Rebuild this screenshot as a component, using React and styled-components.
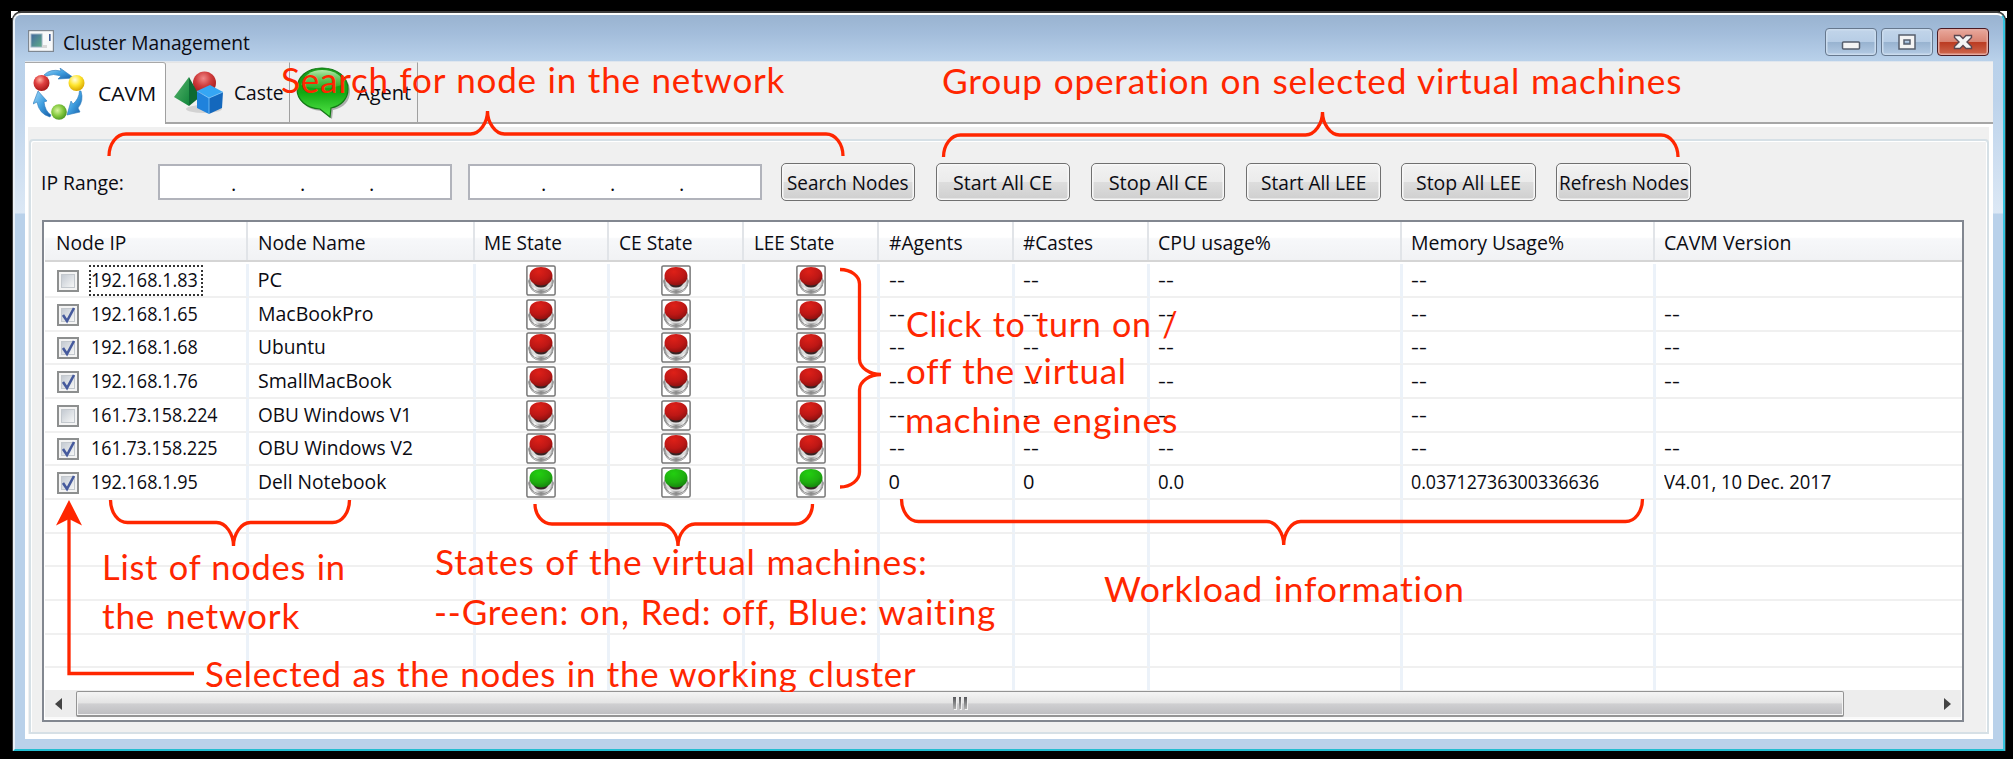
import React, { useLayoutEffect, useRef, useState } from "react";
import styled, { createGlobalStyle } from "styled-components";

const Global = createGlobalStyle`
  * { box-sizing: border-box; }
  html, body { margin: 0; background: #000; }
  body { font-family: "Open Sans", "Noto Sans", sans-serif; font-size: 20px; color: #0b0b12; overflow: hidden; }
`;

/* Text squeezed to a fixed measure */
const FitBox = styled.span`
  display: inline-block;
  flex: none;
  width: ${(p) => p.$w}px;
  white-space: nowrap;
`;
const FitInner = styled.span`
  display: inline-block;
  transform-origin: 0 50%;
`;
function Fit({ w, children }) {
  const ref = useRef(null);
  const [k, setK] = useState(1);
  useLayoutEffect(() => {
    setK(w / ref.current.offsetWidth);
  }, [w]);
  return (
    <FitBox $w={w}>
      <FitInner ref={ref} style={{ transform: `scaleX(${k})` }}>
        {children}
      </FitInner>
    </FitBox>
  );
}

const Desktop = styled.div`
  position: relative;
  width: 2013px;
  height: 759px;
  padding: 13px 8px 8px 13px;
  background: #000;
  overflow: hidden;
`;
const Corner = styled.i`
  position: absolute;
  top: 11px;
  left: ${(p) => p.$x}px;
  width: 7px;
  height: 7px;
  background: #fff;
`;
const Window = styled.div`
  position: relative;
  width: 1992px;
  height: 738px;
  background: #b9d1ea;
  border-style: solid;
  border-width: 2px;
  border-color: #fdfefe #35c3de #22bdd0 #e9f0f7;
  border-radius: 8px 8px 0 0;
  box-shadow: 0 -1px 0 1px #3c3c3c;
  clip-path: inset(-2px -2px 0 -2px);
`;
const TitleBar = styled.div`
  display: flex;
  align-items: flex-start;
  height: 46px;
  padding: 13px 14px 0 13px;
  background: linear-gradient(#99b3d0, #a3bddb 40%, #b9d1ea);
  border-radius: 6px 6px 0 0;
`;
const TitleIcon = styled.span`
  padding-top: 2px;
  svg { display: block; }
`;
const Title = styled.div`
  flex: 1;
  margin: 1px 0 0 9px;
  line-height: 28px;
`;
const TitleButtons = styled.div`
  display: flex;
  gap: 4px;
`;
const TitleButton = styled.div`
  display: grid;
  place-items: center;
  width: 52px;
  height: 28px;
  border: 1.5px solid ${(p) => (p.$close ? "#4b1b22" : "#66788e")};
  border-radius: 4px;
  box-shadow: inset 0 0 0 1.5px ${(p) => (p.$close ? "#e5a99f" : "#cbdcee")};
  background: ${(p) =>
    p.$close
      ? "linear-gradient(#e9a99d, #d98473 48%, #bb3b22 52%, #ce6a50)"
      : "linear-gradient(#c2d5ea, #b7cde5 48%, #98b3d0 52%, #b4cbe4)"};
`;
const Middle = styled.div`
  display: flex;
  height: 678px;
`;
const Side = styled.div`
  width: 10px;
  background: linear-gradient(#b9d1ea, #bdd3eb 40px, #dce8f5 152px, #b9d1ea 153px);
`;
const Client = styled.div`
  display: flex;
  flex-direction: column;
  width: 1968px;
  background: #f0f0f0;
`;
const TabStrip = styled.div`
  display: flex;
  height: 63px;
  border-top: 1px solid #dfe6ee;
  border-bottom: 2px solid #a6a6a6;
`;
const Tab = styled.div`
  display: flex;
  align-items: center;
  height: ${(p) => (p.$active ? 62 : 60)}px;
  width: ${(p) => p.$w}px;
  padding-left: ${(p) => p.$pad}px;
  gap: ${(p) => p.$gap}px;
  background: ${(p) => (p.$active ? "#fff" : "#f0f0f0")};
  border-right: 1.5px solid #a0a0a0;
  border-top: 1px solid ${(p) => (p.$active ? "#a8a8a8" : "#e4e4e4")};
  border-radius: 0 ${(p) => (p.$active ? 3 : 0)}px 0 0;
`;
const TabText = styled.span`
  padding-top: 1px;
  line-height: 28px;
`;
const Panel = styled.div`
  flex: 1;
  padding: 3px 4px 5px 3px;
  background: #fff;
`;
const PanelInner = styled.div`
  height: 100%;
  padding: 12px 0 0 1px;
  background: #f0f0f0;
`;
const Group = styled.div`
  height: 100%;
  padding: 22px 0 0 11px;
  border: 2px solid #d6e0e6;
  border-radius: 4px 4px 0 0;
  box-shadow: inset 1px 1px 0 #fff, inset -1px 0 0 #fff;
`;
const Toolbar = styled.div`
  display: flex;
  align-items: center;
  height: 38px;
  margin-bottom: 19px;
`;
const RangeLabel = styled.span`
  width: 117px;
  margin-left: -1px;
`;
const IpField = styled.div`
  display: flex;
  width: 294px;
  height: 36px;
  margin-right: 16px;
  padding: 6px 0 0 71px;
  background: #fff;
  border: 2px solid #b1b3bb;
  line-height: 24px;
  span { width: 69px; }
`;
const ButtonGroup = styled.div`
  display: flex;
  gap: 20.7px;
  margin-left: 2.5px;
`;
const PushButton = styled.div`
  display: grid;
  place-items: center;
  width: 134.5px;
  height: 38px;
  padding-top: 1px;
  border: 1.5px solid #707070;
  border-radius: 5px;
  box-shadow: inset 0 0 0 1.5px #f8f8f8;
  background: linear-gradient(#f2f2f2, #ebebeb 49%, #dddddd 51%, #cfcfcf);
  line-height: 26px;
`;
const Table = styled.div`
  width: 1922px;
  height: 502px;
  border: 2px solid #828790;
  padding-left: 1px;
  background: #fff;
`;
const cols = "204px 226.5px 134.5px 135px 135px 134.5px 135px 253px 253px 1fr";
const HeadRow = styled.div`
  display: grid;
  grid-template-columns: ${cols};
  height: 40px;
  border-bottom: 2px solid #d5d5d5;
  background: linear-gradient(#fff, #fff 40%, #f7f8fa 44%, #f1f2f4);
`;
const HeadCell = styled.div`
  padding: 7px 0 0 ${(p) => (p.$first ? 10.5 : 8.5)}px;
  margin-right: 1px;
  border-right: ${(p) => (p.$last ? 0 : 2)}px solid #e1e4e8;
  line-height: 28px;
`;
const Rows = styled.div`
  height: 428px;
  padding-top: 2px;
  overflow: hidden;
`;
const Row = styled.div`
  display: grid;
  grid-template-columns: ${cols};
  height: 33.7px;
`;
const Cell = styled.div`
  display: flex;
  align-items: center;
  justify-content: ${(p) => (p.$center ? "center" : "flex-start")};
  padding-top: ${(p) => (p.$center ? 1 : 0)}px;
  padding-left: ${(p) => (p.$center ? 0 : p.$first ? 12 : 8.5)}px;
  border-right: ${(p) => (p.$last ? 0 : 3)}px solid #ecf2f9;
  border-bottom: 2px solid #f0f0f0;
  line-height: 28px;
`;
const Check = styled.span`
  display: grid;
  place-items: center;
  width: 22px;
  height: 22px;
  margin: 2px 10px 0 0;
  border: 2px solid #8d8f8f;
  background: #f4f4f4;
`;
const CheckFace = styled.span`
  width: 14px;
  height: 14px;
  border: 1px solid #c3c8cd;
  background: linear-gradient(135deg, #c4cad2, #f5f6f6);
  svg { display: block; overflow: visible; }
`;
const Ip = styled.span`
  display: flex;
  align-items: center;
  height: 31px;
  padding: 0 3px 0 0;
  border: 2px dotted ${(p) => (p.$focus ? "#333" : "transparent")};
`;
const ScrollBar = styled.div`
  display: flex;
  align-items: center;
  height: 29px;
  width: 1916px;
  padding-top: 1px;
  background: #ededed;
  border-bottom: 2px solid #fafafa;
`;
const ScrollArrow = styled.div`
  display: grid;
  place-items: center;
  flex: none;
  width: ${(p) => (p.$end ? 26 : 31)}px;
  margin-left: ${(p) => (p.$end ? "auto" : 0)};
  padding-right: ${(p) => (p.$end ? 0 : 3)}px;
  svg { display: block; }
`;
const Thumb = styled.div`
  display: flex;
  align-items: center;
  justify-content: center;
  gap: 3px;
  flex: none;
  width: 1768px;
  height: 26px;
  border: 1.5px solid #949494;
  border-bottom-width: 2px;
  border-radius: 2px;
  box-shadow: inset 0 0 0 1px #f3f3f3;
  background: linear-gradient(#f5f5f5, #e4e4e4 47%, #cfcfd1 52%, #bdbdc0);
`;
const Grip = styled.i`
  width: 2.5px;
  height: 12px;
  margin-top: -2px;
  background: linear-gradient(#55565a, #b0b0b0);
  box-shadow: 1px 1px 0 #f0f0f0;
`;

/* Red call-outs laid over the window */
const NoteLayer = styled.div`
  position: absolute;
  inset: 0;
  color: #ff2600;
  font-family: Lato, "Open Sans", sans-serif;
  font-size: 35.5px;
  line-height: 44px;
  letter-spacing: 0.8px;
  word-spacing: 1px;
  font-variant-ligatures: none;
  svg { position: absolute; inset: 0; }
`;
const NoteClip = styled.div`
  position: absolute;
  left: 0;
  top: 0;
  width: 2013px;
  height: 692px;
  overflow: hidden;
`;
const Note = styled.span`
  position: absolute;
  left: ${(p) => p.$x}px;
  top: ${(p) => p.$base - 35}px;
`;

const AppIcon = () => (
  <svg width="26" height="22" viewBox="0 0 26 22">
    <defs>
      <linearGradient id="ai" x1="0" y1="0" x2="1" y2="1">
        <stop offset="0" stopColor="#4468a0" />
        <stop offset="1" stopColor="#5fae86" />
      </linearGradient>
    </defs>
    <rect x="0.5" y="0.5" width="25" height="21" fill="#f8f9fa" stroke="#7e8791" strokeWidth="1.4" />
    <rect x="3" y="4" width="11" height="13" fill="url(#ai)" stroke="#9db4c4" />
    <rect x="14" y="15" width="5" height="3" fill="#d8d8d8" />
    <rect x="21" y="4" width="1.6" height="7" fill="#3f5d99" />
  </svg>
);

const CavmIcon = () => (
  <svg width="52" height="52" viewBox="0 0 52 52">
    <defs>
      <radialGradient id="cr" cx=".4" cy=".3" r=".7">
        <stop offset="0" stopColor="#ffb0a0" /><stop offset=".45" stopColor="#e04040" /><stop offset="1" stopColor="#a81818" />
      </radialGradient>
      <radialGradient id="cy" cx=".4" cy=".3" r=".7">
        <stop offset="0" stopColor="#fffde0" /><stop offset=".5" stopColor="#ffe630" /><stop offset="1" stopColor="#d9a800" />
      </radialGradient>
      <radialGradient id="cg" cx=".4" cy=".4" r=".7">
        <stop offset="0" stopColor="#d8f5a0" /><stop offset=".5" stopColor="#85c940" /><stop offset="1" stopColor="#3c8a1c" />
      </radialGradient>
      <linearGradient id="cb" x1="0" y1="0" x2="1" y2="1">
        <stop offset="0" stopColor="#a8dcfa" /><stop offset=".5" stopColor="#3f9fe0" /><stop offset="1" stopColor="#155ba6" />
      </linearGradient>
    </defs>
    <g fill="url(#cb)" stroke="#2a78bb" strokeWidth=".6">
      <path d="M11 7Q17 .5 28 3L27 0L41 10L25 11L28 8Q20 5 14 8Z" />
      <path d="M48 23Q51 33 45 40L47 44L34 47L38 33L40 36Q46 31 46.500 23Z" />
      <path d="M17 49Q6 46 4 34L0 36L5 23L14 33L11 34Q12 43 18 47Z" />
    </g>
    <circle cx="8.500" cy="15" r="8" fill="url(#cr)" />
    <circle cx="43.500" cy="15" r="8" fill="url(#cy)" />
    <circle cx="26" cy="44" r="7.800" fill="url(#cg)" />
  </svg>
);

const CasteIcon = () => (
  <svg width="50" height="44" viewBox="0 0 50 44">
    <ellipse cx="30" cy="38" rx="18" ry="4" fill="#000" opacity=".12" />
    <circle cx="30.500" cy="12" r="11.500" fill="url(#kr)" />
    <defs>
      <radialGradient id="kr" cx=".45" cy=".3" r=".75">
        <stop offset="0" stopColor="#f08888" /><stop offset=".45" stopColor="#cf3c3c" /><stop offset="1" stopColor="#9c1414" />
      </radialGradient>
      <linearGradient id="kg" x1="0" y1="0" x2="1" y2="1">
        <stop offset="0" stopColor="#58b56c" /><stop offset="1" stopColor="#12863c" />
      </linearGradient>
    </defs>
    <path d="M15 6L0 26L15 35Z" fill="url(#kg)" />
    <path d="M15 6L26 26L15 35Z" fill="#0d6a33" />
    <path d="M23 20L36 14L49 21L35 27Z" fill="#35a6f4" />
    <path d="M23 20L35 27V43L23 37Z" fill="#1f82dc" />
    <path d="M49 21L35 27V43L48 37Z" fill="#1468bd" />
    <path d="M23 20L35 27L49 21M35 27V43" fill="none" stroke="#7cc6fa" strokeWidth=".8" />
  </svg>
);

const AgentIcon = () => (
  <svg width="54" height="52" viewBox="0 0 54 52">
    <defs>
      <linearGradient id="ag" x1="0" y1="0" x2="0" y2="1">
        <stop offset="0" stopColor="#1c9a1c" /><stop offset=".5" stopColor="#12a812" /><stop offset="1" stopColor="#55e84a" />
      </linearGradient>
      <linearGradient id="ah" x1="0" y1="0" x2="0" y2="1">
        <stop offset="0" stopColor="#b5eaaa" /><stop offset="1" stopColor="#4fbf48" stopOpacity=".4" />
      </linearGradient>
    </defs>
    <path d="M28 3C43 3 54 12 54 24C54 34 48 41 37 43L36 52L25 44C11 43 3 35 3 24C3 12 13 3 28 3Z" fill="#000" opacity=".28" />
    <path d="M26 1C41 1 52 10 52 22C52 32 45 39 35 41L34 50L24 42C10 41 1 33 1 22C1 10 11 1 26 1Z" fill="url(#ag)" stroke="#137a15" strokeWidth="1.2" />
    <path d="M26 3C38 3 47 9 48 17C38 22 16 23 5 18C7 9 15 3 26 3Z" fill="url(#ah)" />
  </svg>
);

const StateIcon = ({ on }) => {
  const id = on ? "son" : "soff";
  return (
    <svg width="30" height="31" viewBox="0 0 30 31">
      <defs>
        <radialGradient id={id} cx=".4" cy=".25" r=".8">
          <stop offset="0" stopColor={on ? "#22cf10" : "#de2018"} />
          <stop offset=".6" stopColor={on ? "#1fae10" : "#bd1715"} />
          <stop offset="1" stopColor={on ? "#15800d" : "#86100f"} />
        </radialGradient>
        <linearGradient id="ring" x1="0" y1="0" x2="1" y2="0">
          <stop offset="0" stopColor="#777" /><stop offset=".25" stopColor="#fff" /><stop offset=".5" stopColor="#8a8a8a" /><stop offset=".8" stopColor="#f4f4f4" /><stop offset="1" stopColor="#888" />
        </linearGradient>
      </defs>
      <rect x=".9" y=".9" width="28.200" height="29.200" rx="1.500" fill="#fff" stroke="#777" strokeWidth="1.500" />
      <path d="M2.500 16Q4 28 15 28.500Q26 28 27.500 16L25 11H5Z" fill="url(#ring)" stroke="#9a9a9a" strokeWidth=".9" />
      <path d="M3.500 20Q8 27 15 27Q22 27 26.500 20" fill="none" stroke="#888" strokeWidth=".9" />
      <path d="M4 14Q5 24.500 15 24.500Q25 24.500 26 14Z" fill="#dcdcdc" />
      <path d="M7 17Q9 22.600 15 22.600Q21 22.600 23 17Z" fill="#352525" />
      <path d="M3.500 11C3.500 5 9 2 15 2C21 2 26.500 5 26.500 11C26.500 17 21 20.500 15 20.500C9 20.500 3.500 17 3.500 11Z" fill={`url(#${id})`} />
    </svg>
  );
};

const Tick = () => (
  <svg width="12" height="12" viewBox="0 0 12 12">
    <path d="M1 6L5 12L12 -1" fill="none" stroke="#465a9d" strokeWidth="2.600" />
  </svg>
);

/* Curly brace across [a,b] with its tip at t; s is the end side, m the bar, p the point */
const hBrace = (a, b, s, m, t, p) => {
  const r = 17, c = 7.5;
  const e = m + (s - m) * 0.45;
  const q = m + (p - m) * 0.5;
  return [
    `M${a} ${s}C${a} ${e} ${a + c} ${m} ${a + r} ${m}H${t - r}`,
    `C${t - c} ${m} ${t} ${q} ${t} ${p}C${t} ${q} ${t + c} ${m} ${t + r} ${m}`,
    `H${b - r}C${b - c} ${m} ${b} ${e} ${b} ${s}`,
  ].join("");
};

const heads = [
  ["Node IP", 70], ["Node Name", 108], ["ME State", 78], ["CE State", 73], ["LEE State", 80],
  ["#Agents", 74], ["#Castes", 70], ["CPU usage%", 113], ["Memory Usage%", 153], ["CAVM Version", 128],
];
const dash = ["--", 16];
const off = [dash, dash, dash, dash];
const nodes = [
  { ip: "192.168.1.83", w: 107, name: ["PC", 25], focus: true, data: [...off, null] },
  { ip: "192.168.1.65", w: 107, name: ["MacBookPro", 115], checked: true, data: [...off, dash] },
  { ip: "192.168.1.68", w: 107, name: ["Ubuntu", 68], checked: true, data: [...off, dash] },
  { ip: "192.168.1.76", w: 107, name: ["SmallMacBook", 134], checked: true, data: [...off, dash] },
  { ip: "161.73.158.224", w: 127, name: ["OBU Windows V1", 154], data: [...off, null] },
  { ip: "161.73.158.225", w: 127, name: ["OBU Windows V2", 155], checked: true, data: [...off, dash] },
  { ip: "192.168.1.95", w: 107, name: ["Dell Notebook", 128], checked: true, on: true,
    data: [["0", 11], ["0", 11], ["0.0", 26], ["0.03712736300336636", 188], ["V4.01, 10 Dec. 2017", 167]] },
];
const actions = [
  ["Search Nodes", 122], ["Start All CE", 99], ["Stop All CE", 99], ["Start All LEE", 105], ["Stop All LEE", 105], ["Refresh Nodes", 130],
];
const notes = [
  [281, 93, 504, "Search for node in the network"],
  [942, 94, 740, "Group operation on selected virtual machines"],
  [906, 337, 272, "Click to turn on /"],
  [906, 384, 221, "off the virtual"],
  [905, 433, 273, "machine engines"],
  [102, 580, 244, "List of nodes in"],
  [102, 629, 198, "the network"],
  [435, 575, 493, "States of the virtual machines:"],
  [434, 625, 562, "--Green: on, Red: off, Blue: waiting"],
  [205, 687, 711, "Selected as the nodes in the working cluster"],
  [1104, 602, 361, "Workload information"],
];

export default function App() {
  return (
    <Desktop>
      <Global />
      <Corner $x={11} />
      <Corner $x={2000} />
      <Window>
        <TitleBar>
          <TitleIcon><AppIcon /></TitleIcon>
          <Title><Fit w={187}>Cluster Management</Fit></Title>
          <TitleButtons>
            <TitleButton>
              <svg width="20" height="20" viewBox="0 0 20 20"><rect x="1.500" y="10" width="17" height="7" rx="1" fill="#f4f4f4" stroke="#555e6c" strokeWidth="1.500" /></svg>
            </TitleButton>
            <TitleButton>
              <svg width="20" height="20" viewBox="0 0 20 20"><path fillRule="evenodd" d="M2 3H18V17H2ZM7 8V12H13V8Z" fill="#f4f4f4" stroke="#555e6c" strokeWidth="1.500" /></svg>
            </TitleButton>
            <TitleButton $close>
              <svg width="20" height="20" viewBox="0 0 20 20"><path d="M1.500 3.500H7L10 6.500L13 3.500H18.500V5.500L14 10L18.500 14.500V16.500H13L10 13.500L7 16.500H1.500V14.500L6 10L1.500 5.500Z" fill="#f4f4f4" stroke="#5b4750" strokeWidth="1.400" /></svg>
            </TitleButton>
          </TitleButtons>
        </TitleBar>
        <Middle>
          <Side />
          <Client>
            <TabStrip>
              <Tab $active $w={141} $pad={8} $gap={12.5}><CavmIcon /><TabText><Fit w={58}>CAVM</Fit></TabText></Tab>
              <Tab $w={123.5} $pad={7.5} $gap={10}><CasteIcon /><TabText><Fit w={50}>Caste</Fit></TabText></Tab>
              <Tab $w={128} $pad={6.5} $gap={7}><AgentIcon /><TabText><Fit w={54}>Agent</Fit></TabText></Tab>
            </TabStrip>
            <Panel>
              <PanelInner>
                <Group>
                  <Toolbar>
                    <RangeLabel><Fit w={83}>IP Range:</Fit></RangeLabel>
                    <IpField><span>.</span><span>.</span><span>.</span></IpField>
                    <IpField><span>.</span><span>.</span><span>.</span></IpField>
                    <ButtonGroup>
                      {actions.map(([t, w]) => <PushButton key={t}><Fit w={w}>{t}</Fit></PushButton>)}
                    </ButtonGroup>
                  </Toolbar>
                  <Table>
                    <HeadRow>
                      {heads.map(([t, w], i) => <HeadCell key={t} $first={i === 0} $last={i === 9}><Fit w={w}>{t}</Fit></HeadCell>)}
                    </HeadRow>
                    <Rows>
                      {nodes.map((n) => (
                        <Row key={n.ip}>
                          <Cell $first>
                            <Check><CheckFace>{n.checked && <Tick />}</CheckFace></Check>
                            <Ip $focus={n.focus}><Fit w={n.w}>{n.ip}</Fit></Ip>
                          </Cell>
                          <Cell><Fit w={n.name[1]}>{n.name[0]}</Fit></Cell>
                          {[0, 1, 2].map((i) => <Cell key={i} $center><StateIcon on={n.on} /></Cell>)}
                          {n.data.map((d, i) => <Cell key={i} $last={i === 4}>{d && <Fit w={d[1]}>{d[0]}</Fit>}</Cell>)}
                        </Row>
                      ))}
                      {[0, 1, 2, 3, 4, 5].map((r) => (
                        <Row key={r}>{heads.map(([t], i) => <Cell key={t} $last={i === 9} />)}</Row>
                      ))}
                    </Rows>
                    <ScrollBar>
                      <ScrollArrow><svg width="8" height="12" viewBox="0 0 8 12"><path d="M7 0V12L0 6Z" fill="#444" /></svg></ScrollArrow>
                      <Thumb><Grip /><Grip /><Grip /></Thumb>
                      <ScrollArrow $end><svg width="8" height="12" viewBox="0 0 8 12"><path d="M0 0V12L7 6Z" fill="#444" /></svg></ScrollArrow>
                    </ScrollBar>
                  </Table>
                </Group>
              </PanelInner>
            </Panel>
          </Client>
          <Side />
        </Middle>
      </Window>
      <NoteLayer>
        <svg width="2013" height="759" viewBox="0 0 2013 759" fill="none" stroke="#ff2600" strokeWidth="3.300">
          <path d={hBrace(109, 843, 156, 134, 487.5, 111)} />
          <path d={hBrace(943.5, 1678, 157, 135, 1322.5, 112)} />
          <path d={hBrace(110.5, 349.5, 500, 522.5, 233.5, 546)} />
          <path d={hBrace(535, 812.5, 504, 524, 678, 546)} />
          <path d={hBrace(901.5, 1642.5, 499, 521.5, 1283.7, 545)} />
          <path d="M840 269.500C851 269.500 859.500 276 859.500 284V359C859.500 368 870 374.500 881 374.500C870 374.500 859.500 381 859.500 390V472C859.500 480 851 487 840 487" />
          <path d="M194 673.500H69V516" />
          <path d="M69 500L82 525.500L69 519L56 525.500Z" fill="#ff2600" stroke="none" />
        </svg>
        <NoteClip>
          {notes.map(([x, base, w, t]) => <Note key={t} $x={x} $base={base}><Fit w={w}>{t}</Fit></Note>)}
        </NoteClip>
      </NoteLayer>
    </Desktop>
  );
}
